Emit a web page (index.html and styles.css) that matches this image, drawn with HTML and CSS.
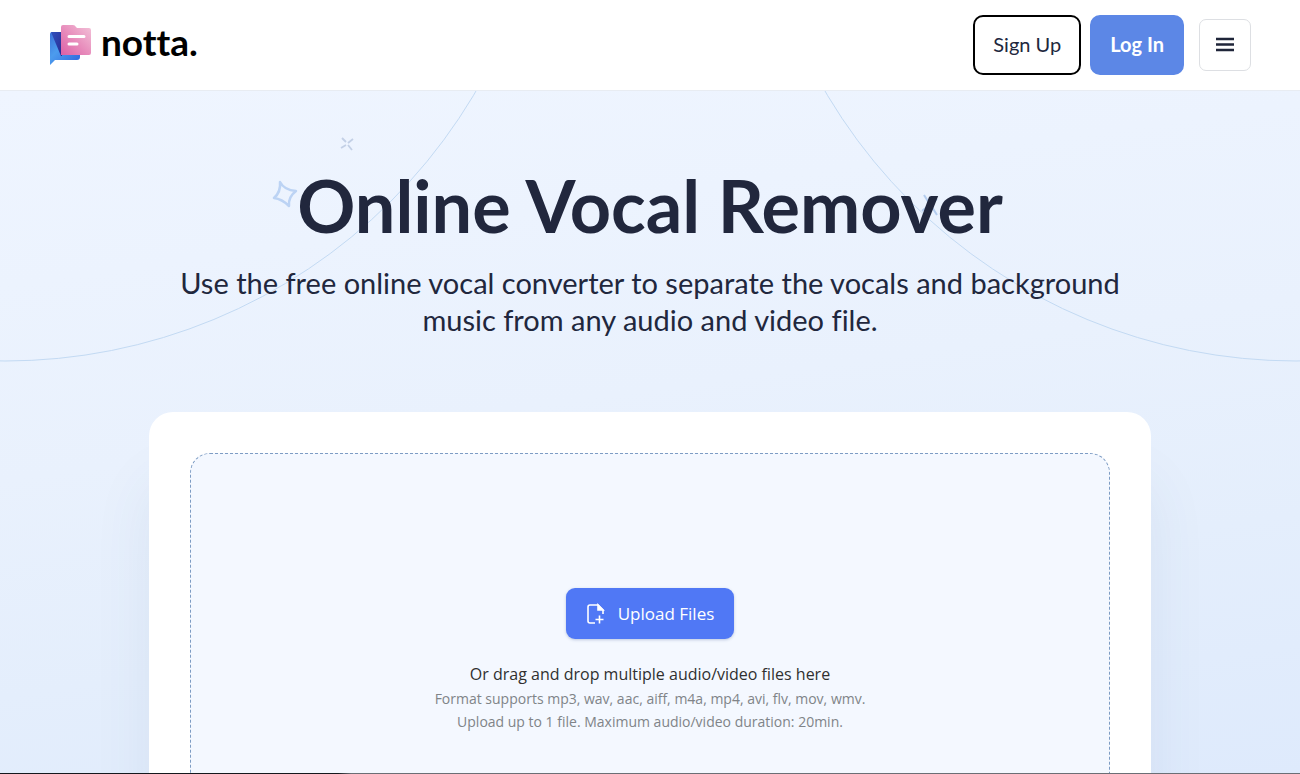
FILE: index.html
```html
<!DOCTYPE html>
<html lang="en">
<head>
    <meta charset="UTF-8">
    <meta name="viewport" content="width=device-width, initial-scale=1.0">
    <title>Online Vocal Remover - Notta</title>
    <link rel="stylesheet" href="styles.css">
</head>
<body>
    <header class="header">
        <a class="logo" href="#">
            <svg class="logo-mark" width="44" height="44" viewBox="0 0 44 44" aria-hidden="true">
                <defs>
                    <linearGradient id="blue" x1="0" y1="0" x2="1" y2="1">
                        <stop offset="0" stop-color="#3a70d8"/>
                        <stop offset="0.4" stop-color="#4c9cee"/>
                        <stop offset="1" stop-color="#2f62dc"/>
                    </linearGradient>
                    <linearGradient id="navy" x1="0" y1="0" x2="1" y2="1">
                        <stop offset="0" stop-color="#2f50bc"/>
                        <stop offset="1" stop-color="#2a2a92"/>
                    </linearGradient>
                    <linearGradient id="pink" x1="0" y1="1" x2="1" y2="0">
                        <stop offset="0" stop-color="#dc5fa6"/>
                        <stop offset="0.5" stop-color="#e88fbd"/>
                        <stop offset="1" stop-color="#f3c3d9"/>
                    </linearGradient>
                </defs>
                <path d="M1 11q0-2 2-2h25q3 0 3 3v22q0 3-3 3H6l-5 5z" fill="url(#blue)"/>
                <path d="M2 9h11v24h-1z" fill="url(#navy)"/>
                <path d="M12 4q0-2 2-2h10q2 0 3 2l1 1h12q2 0 2 2v23q0 2-2 2H12z" fill="url(#pink)"/>
                <path d="M20 13.500h15M20 21h8" stroke="#fff" stroke-width="3" stroke-linecap="round"/>
            </svg>
            <span class="logo-text">notta.</span>
        </a>
        <nav class="actions">
            <button class="btn btn-signup">Sign Up</button>
            <button class="btn btn-login">Log In</button>
            <button class="btn-menu" aria-label="Menu">
                <svg width="20" height="16" viewBox="0 0 20 16" aria-hidden="true">
                    <path d="M1 2h18M1 7.500h18M1 13h18" stroke="#1f2539" stroke-width="2.600"/>
                </svg>
            </button>
        </nav>
    </header>

    <main class="hero">
        <!-- background arcs and sparkles -->
        <svg class="arc arc-left" width="554" height="274" viewBox="0 0 554 274" aria-hidden="true">
            <circle cx="5" cy="-276" r="546"/>
        </svg>
        <svg class="arc arc-right" width="554" height="274" viewBox="0 0 554 274" aria-hidden="true">
            <circle cx="550" cy="-276" r="546"/>
        </svg>

        <div class="intro">
            <svg class="spark spark-star" width="26" height="28" viewBox="0 0 26 28" aria-hidden="true">
                <path d="M8 2Q12 10 24 11Q16 17 17 26Q10 19 2 18Q9 12 8 2z" fill="none" stroke="#bcd3f4" stroke-width="2.500" stroke-linejoin="round"/>
            </svg>
            <svg class="spark spark-cross" width="14" height="14" viewBox="0 0 14 14" aria-hidden="true">
                <path d="M2 1l4 4M13 2L8 6M1 11l5-3M8 8l4 5" stroke="#c3d0e6" stroke-width="1.800"/>
            </svg>
            <svg class="spark spark-right" width="18" height="22" viewBox="0 0 18 22" aria-hidden="true">
                <path d="M3 1l5 8M11 13l5 8M1 17l6-5M11 9l5-4" stroke="#b4cdef" stroke-width="2"/>
            </svg>
            <h1>Online Vocal Remover</h1>
            <p class="subtitle">Use the free online vocal converter to separate the vocals and background music from any audio and video file.</p>
        </div>

        <section class="card">
            <div class="dropzone">
                <button class="btn-upload">
                    <svg width="20" height="22" viewBox="0 0 20 22" fill="none" stroke="#fff" stroke-width="1.600" aria-hidden="true">
                        <path d="M9 20H4q-2 0-2-2V4q0-2 2-2h8l5 5v4"/>
                        <path d="M12 2v5h5z" fill="#fff"/>
                        <path d="M13.500 12.500v8M9.500 16.500h8"/>
                    </svg>
                    Upload Files
                </button>
                <p class="hint">Or drag and drop multiple audio/video files here</p>
                <p class="note">Format supports mp3, wav, aac, aiff, m4a, mp4, avi, flv, mov, wmv.</p>
                <p class="note">Upload up to 1 file. Maximum audio/video duration: 20min.</p>
            </div>
        </section>
    </main>

    <div class="bottom-line"></div>
</body>
</html>
```
FILE: styles.css
```css
* {
    box-sizing: border-box;
}
body {
    margin: 0;
    height: 100vh;
    display: flex;
    flex-direction: column;
    overflow: hidden;
    font-family: Lato, sans-serif;
    color: #21273d;
}
h1, p {
    margin: 0;
}
button {
    font-family: inherit;
    cursor: pointer;
}
.header {
    flex: none;
    display: flex;
    justify-content: space-between;
    align-items: center;
    height: 91px;
    padding: 0 49px;
    background-color: white;
    border-bottom: 1px solid #e8ecf2;
}
.logo {
    display: flex;
    align-items: center;
    gap: 8px;
    color: black;
    text-decoration: none;
}
.logo-text {
    padding-bottom: 6px;
    font-size: 37px;
    line-height: 40px;
    font-weight: bold;
    font-variant-ligatures: none;
}
.actions {
    display: flex;
    align-items: center;
}
.btn {
    height: 60px;
    padding: 0 18px 2px;
    border-radius: 10px;
    font-size: 20px;
}
.btn-signup {
    margin-right: 9px;
    background-color: white;
    border: 2px solid black;
    color: #21273d;
}
.btn-login {
    margin-right: 15px;
    background-color: #5c87e6;
    border: 2px solid #5c87e6;
    color: white;
    font-weight: bold;
}
.btn-menu {
    display: flex;
    align-items: center;
    justify-content: center;
    width: 52px;
    height: 52px;
    padding: 0;
    background-color: white;
    border: 1px solid #dddfe3;
    border-radius: 7px;
}
.hero {
    flex: 1;
    min-height: 0;
    position: relative;
    overflow: hidden;
    padding: 76px 149px 0;
    background: linear-gradient(172deg, #eff5ff 0%, #e9f1fd 45%, #e4eefc 70%, #deeafc 100%);
}
.arc {
    position: absolute;
    top: 0;
    fill: none;
    stroke: #c3daf3;
}
.arc-left {
    left: 0;
}
.arc-right {
    right: 0;
}
.intro {
    position: relative;
    text-align: center;
}
.spark {
    position: absolute;
}
.spark-star {
    left: 123px;
    top: 13px;
}
.spark-cross {
    left: 191px;
    top: -30px;
}
.spark-right {
    right: 212px;
    top: 27px;
}
h1 {
    position: relative;
    font-size: 72px;
    line-height: 76px;
    font-weight: bold;
}
.subtitle {
    position: relative;
    margin-top: 21px;
    font-size: 29px;
    line-height: 37px;
    font-variant-ligatures: none;
}
.card {
    position: relative;
    height: 600px;
    margin-top: 74px;
    padding: 41px;
    background-color: white;
    border-radius: 24px;
    box-shadow: 0 70px 60px rgba(60, 90, 130, 0.08);
}
.dropzone {
    display: flex;
    flex-direction: column;
    align-items: center;
    height: 100%;
    padding-top: 134px;
    background-color: #f4f8ff;
    border: 1px dashed #7d9cc4;
    border-radius: 20px;
    font-family: "Open Sans", sans-serif;
}
.btn-upload {
    display: flex;
    align-items: center;
    gap: 12px;
    height: 51px;
    margin-bottom: 22px;
    padding: 0 20px;
    background-color: #5078f5;
    border: none;
    border-radius: 9px;
    box-shadow: 0 1px 3px rgba(60, 90, 150, 0.3);
    color: white;
    font-size: 17px;
}
.hint {
    font-size: 16px;
    line-height: 26px;
    color: #303030;
}
.note {
    font-size: 14px;
    line-height: 23px;
    color: #808488;
}
.bottom-line {
    position: fixed;
    left: 0;
    right: 0;
    bottom: 0;
    height: 1px;
    background: linear-gradient(to right, #15181d 26%, #6b6e75 27%);
}
```
